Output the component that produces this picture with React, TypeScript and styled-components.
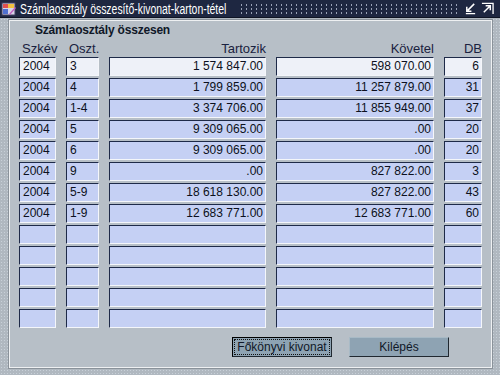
import React from 'react';
import styled, {createGlobalStyle} from 'styled-components';

const GlobalStyle = createGlobalStyle`
  html, body {
    margin: 0;
    padding: 0;
    background: #b7bfc7;
  }
  body {
    font-family: "Liberation Sans", Arial, sans-serif;
  }
`;

type Row = {
  year: string,
  oszt: string,
  tartozik: string,
  kovetel: string,
  db: string,
};

const rows: Row[] = [
  {year: '2004', oszt: '3', tartozik: '1 574 847.00', kovetel: '598 070.00', db: '6'},
  {year: '2004', oszt: '4', tartozik: '1 799 859.00', kovetel: '11 257 879.00', db: '31'},
  {year: '2004', oszt: '1-4', tartozik: '3 374 706.00', kovetel: '11 855 949.00', db: '37'},
  {year: '2004', oszt: '5', tartozik: '9 309 065.00', kovetel: '.00', db: '20'},
  {year: '2004', oszt: '6', tartozik: '9 309 065.00', kovetel: '.00', db: '20'},
  {year: '2004', oszt: '9', tartozik: '.00', kovetel: '827 822.00', db: '3'},
  {year: '2004', oszt: '5-9', tartozik: '18 618 130.00', kovetel: '827 822.00', db: '43'},
  {year: '2004', oszt: '1-9', tartozik: '12 683 771.00', kovetel: '12 683 771.00', db: '60'},
  {year: '', oszt: '', tartozik: '', kovetel: '', db: ''},
  {year: '', oszt: '', tartozik: '', kovetel: '', db: ''},
  {year: '', oszt: '', tartozik: '', kovetel: '', db: ''},
  {year: '', oszt: '', tartozik: '', kovetel: '', db: ''},
  {year: '', oszt: '', tartozik: '', kovetel: '', db: ''},
];

const AppIcon = () => (
  <svg width="16" height="16" viewBox="0 0 16 16">
    <rect x="1" y="2" width="13" height="12" fill="#d8d4e8" stroke="#404060"/>
    <rect x="2" y="3" width="5" height="4" fill="#e05050"/>
    <rect x="7" y="3" width="6" height="4" fill="#f0c040"/>
    <rect x="2" y="8" width="5" height="5" fill="#5070d0"/>
    <path d="M8 13 L14 6 L15 7 L9 14 Z" fill="#c060c0"/>
  </svg>
);

const MinIcon = () => (
  <svg width="13" height="13" viewBox="0 0 14 14">
    <path d="M11 2 L4 9 M3 5 V10 H8" stroke="#fff" strokeWidth="1.6" fill="none"/>
    <path d="M2 12.5 H12" stroke="#fff" strokeWidth="1.4"/>
  </svg>
);

const MaxIcon = () => (
  <svg width="13" height="13" viewBox="0 0 14 14">
    <path d="M1 1.5 H13 V13" stroke="#fff" strokeWidth="1.4" fill="none"/>
    <path d="M3 11 L10 4 M5 4 H10 V9" stroke="#fff" strokeWidth="1.6" fill="none"/>
  </svg>
);

const App = () => {
  return (
    <>
      <GlobalStyle/>
      <Window>
        <TitleBar>
          <TitleLeft>
            <AppIcon/>
            <TitleBox>
              <TitleText>Számlaosztály összesítő-kivonat-karton-tétel</TitleText>
            </TitleBox>
          </TitleLeft>
          <Dots/>
          <TitleButtons>
            <MinIcon/>
            <MaxIcon/>
          </TitleButtons>
        </TitleBar>
        <Frame>
          <Panel>
            <Heading>Számlaosztály összesen</Heading>
            <Grid>
              <Header>Szkév</Header>
              <Header>Oszt.</Header>
              <Header $right>Tartozik</Header>
              <Header $right>Követel</Header>
              <Header $right>DB</Header>
              {rows.map((r, i) => (
                <React.Fragment key={i}>
                  <Field $current={i === 0}>{r.year}</Field>
                  <Field $current={i === 0}>{r.oszt}</Field>
                  <Field $current={i === 0} $right>{r.tartozik}</Field>
                  <Field $current={i === 0} $right>{r.kovetel}</Field>
                  <Field $current={i === 0} $right>{r.db}</Field>
                </React.Fragment>
              ))}
            </Grid>
            <ButtonRow>
              <Button $focused>
                <FocusRing>Főkönyvi kivonat</FocusRing>
              </Button>
              <Button>Kilépés</Button>
            </ButtonRow>
          </Panel>
        </Frame>
      </Window>
    </>
  );
}

const Window = styled.div`
  width: 500px;
  height: 375px;
  display: flex;
  flex-direction: column;
  background: #b7bfc7;
  overflow: hidden;
`

const TitleBar = styled.div`
  height: 17px;
  flex-shrink: 0;
  display: flex;
  align-items: center;
  background: #1e2741;
  border-bottom: 1px solid #0e1424;
`

const TitleLeft = styled.div`
  display: flex;
  align-items: center;
  gap: 3px;
  padding-left: 1px;
`

const TitleBox = styled.div`
  width: 215px;
`

const TitleText = styled.div`
  color: #ffffff;
  font-size: 14px;
  white-space: nowrap;
  transform: scaleX(0.745);
  transform-origin: left center;
  width: max-content;
`

const Dots = styled.div`
  flex: 1;
  height: 11px;
  margin: 0 6px 0 4px;
  background-image: radial-gradient(circle, #9aa2b8 0.8px, transparent 1.1px);
  background-size: 5px 4px;
`

const TitleButtons = styled.div`
  display: flex;
  gap: 4px;
  padding-right: 6px;
`

const Frame = styled.div`
  flex: 1;
  padding: 2px 8px 7px 9px;
  display: flex;
  background-color: #b0b8c0;
  background-image: radial-gradient(circle, #c8d0d8 0.6px, transparent 0.9px);
  background-size: 3px 3px;
`

const Panel = styled.div`
  flex: 1;
  background: #b7bfc7;
  border: 1px solid #eef0f2;
  outline: 1px solid #8a929a;
  padding: 0 0 0 9px;
  display: flex;
  flex-direction: column;
`

const Heading = styled.div`
  font-size: 12px;
  font-weight: bold;
  letter-spacing: -0.2px;
  color: #101828;
  padding-left: 16px;
  height: 18px;
  line-height: 18px;
`

const Grid = styled.div`
  display: grid;
  grid-template-columns: 37px 33px 157px 158px 38px;
  grid-template-rows: 16px;
  column-gap: 10px;
  row-gap: 2px;
  grid-auto-rows: 19px;
`

const Header = styled.div<{$right?: boolean}>`
  font-size: 13px;
  color: #1a2240;
  text-align: ${p => (p.$right ? 'right' : 'left')};
  padding: 0 0 0 3px;
  line-height: 20px;
  height: 16px;
`

const Field = styled.div<{$right?: boolean, $current?: boolean}>`
  box-sizing: border-box;
  height: 19px;
  font-size: 12px;
  color: #0c1020;
  line-height: 17px;
  white-space: nowrap;
  text-align: ${p => (p.$right ? 'right' : 'left')};
  padding: 0 2px 0 3px;
  background: ${p => (p.$current ? '#eef1f8' : '#c5d0f4')};
  border-top: 1px solid #1e2a48;
  border-left: 1px solid #1e2a48;
  border-bottom: 1px solid #f4f6fa;
  border-right: 1px solid #f4f6fa;
`

const ButtonRow = styled.div`
  display: flex;
  gap: 17px;
  padding-left: 213px;
  margin-top: 9px;
`

const Button = styled.div<{$focused?: boolean}>`
  box-sizing: border-box;
  width: 100px;
  height: 20px;
  padding: 1px;
  font-size: 12px;
  color: #101828;
  text-align: center;
  line-height: 18px;
  background: #8ea3b3;
  border: 1px solid ${p => (p.$focused ? '#000000' : '#8ea3b3')};
  border-right-color: #202830;
  border-bottom-color: #202830;
  ${p => !p.$focused && 'line-height: 16px; border-top-color: #a8bac6; border-left-color: #a8bac6;'}
`

const FocusRing = styled.div`
  height: 100%;
  box-sizing: border-box;
  border: 1px dotted #101010;
  line-height: 14px;
`

export default App;
